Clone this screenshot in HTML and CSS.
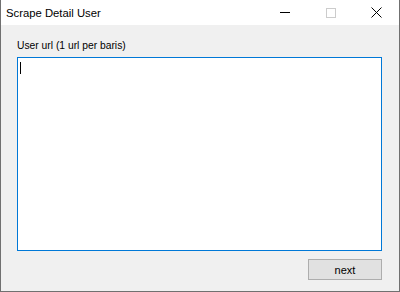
FILE: index.html
```html
<!DOCTYPE html>
<html lang="en">
<head>
  <meta charset="UTF-8">
  <meta name="viewport" content="width=device-width, initial-scale=1.0">
  <title>Scrape Detail User</title>
  <link rel="stylesheet" href="styles.css">
</head>
<body>
  <div class="window">
    <div class="titlebar">
      <span class="title">Scrape Detail User</span>
      <div class="caption-buttons">
        <div class="cap-btn"><span class="min-line"></span></div>
        <div class="cap-btn"><span class="max-box"></span></div>
        <div class="cap-btn">
          <svg width="11" height="11" viewBox="0 0 11 11">
            <path d="M0.5 0.5 L10.5 10.5 M10.5 0.5 L0.5 10.5" stroke="#000" stroke-width="1" fill="none"/>
          </svg>
        </div>
      </div>
    </div>
    <div class="client">
      <label class="field-label">User url (1 url per baris)</label>
      <div class="textbox"><span class="caret"></span></div>
      <div class="actions">
        <button class="btn">next</button>
      </div>
    </div>
  </div>
</body>
</html>
```

FILE: styles.css
```css
body {
  margin: 0;
  padding: 0;
  font-family: "Liberation Sans", Arial, sans-serif;
  background: #f0f0f0;
}
.window {
  width: 400px;
  height: 292px;
  box-sizing: border-box;
  border: 1px solid #707070;
  border-top: none;
  display: flex;
  flex-direction: column;
  background: #f0f0f0;
}
.titlebar {
  height: 25px;
  background: #fff;
  display: flex;
  align-items: center;
  flex-shrink: 0;
}
.title {
  font-family: "Liberation Sans", Arial, sans-serif;
  font-size: 11.3px;
  color: #000;
  padding-left: 5px;
  flex: 1;
}
.caption-buttons {
  display: flex;
  height: 100%;
}
.cap-btn {
  width: 46px;
  height: 25px;
  display: flex;
  align-items: center;
  justify-content: center;
}
.cap-btn:last-child {
  width: 45px;
}
.min-line {
  width: 10px;
  height: 1px;
  background: #000;
}
.max-box {
  width: 8px;
  height: 8px;
  border: 1px solid #cccccc;
}
.client {
  flex: 1;
  display: flex;
  flex-direction: column;
  padding: 14px 17px 0 16px;
}
.field-label {
  font-size: 10.3px;
  color: #000;
  height: 18px;
  line-height: 14px;
}
.textbox {
  height: 194px;
  box-sizing: border-box;
  border: 1px solid #0078d7;
  background: #fff;
  padding: 4px 0 0 2px;
}
.caret {
  display: block;
  width: 1px;
  height: 12px;
  background: #000;
}
.actions {
  display: flex;
  justify-content: flex-end;
  padding-top: 8px;
}
.btn {
  width: 74px;
  height: 21px;
  box-sizing: border-box;
  border: 1px solid #adadad;
  background: #e1e1e1;
  font-family: "Liberation Sans", Arial, sans-serif;
  font-size: 11px;
  color: #000;
  padding: 0;
}
```
